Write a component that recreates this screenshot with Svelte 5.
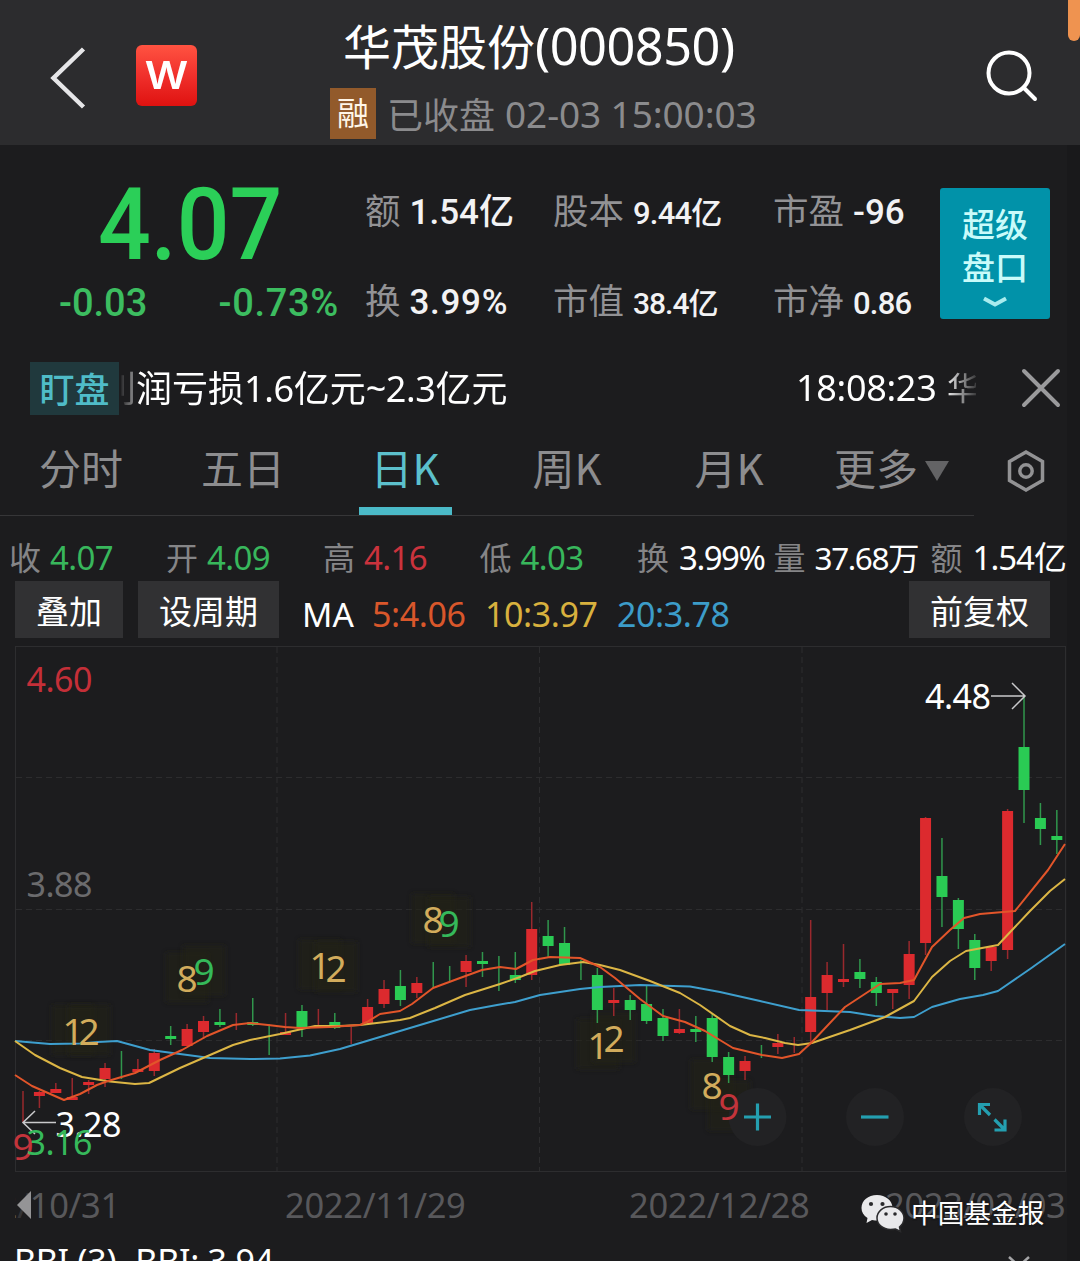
<script lang="ts">
  const facts = [
    { label: '额', value: '1.54亿', size: 'large' },
    { label: '股本', value: '9.44亿', size: 'medium' },
    { label: '市盈', value: '-96', size: 'large' },
    { label: '换', value: '3.99%', size: 'large percent' },
    { label: '市值', value: '38.4亿', size: 'small' },
    { label: '市净', value: '0.86', size: 'medium' },
  ];

  const tabs = ['分时', '五日', '日K', '周K', '月K', '更多'];
  let activeTab = $state('日K');

  const daily = [
    { label: '收', value: '4.07', tone: 'down' },
    { label: '开', value: '4.09', tone: 'down' },
    { label: '高', value: '4.16', tone: 'up' },
    { label: '低', value: '4.03', tone: 'down' },
    { label: '换', value: '3.99%', tone: 'turnover' },
    { label: '量', value: '37.68万', tone: 'volume' },
    { label: '额', value: '1.54亿', tone: 'total' },
  ];

  // direction, high, body top, body bottom, low (equal body edges = wick only)
  const candles: [string, number, number, number, number][] = [
    ['up', 1091, 1122, 1122, 1122],
    ['up', 1091, 1092, 1096, 1108],
    ['up', 1083, 1089, 1093, 1093],
    ['up', 1078, 1097, 1100, 1100],
    ['up', 1080, 1082, 1085, 1094],
    ['up', 1063, 1068, 1079, 1087],
    ['down', 1051, 1079, 1079, 1079],
    ['up', 1059, 1069, 1072, 1072],
    ['up', 1049, 1053, 1071, 1076],
    ['down', 1026, 1036, 1039, 1045],
    ['up', 1024, 1029, 1046, 1046],
    ['up', 1016, 1021, 1032, 1039],
    ['down', 1009, 1022, 1025, 1027],
    ['up', 1013, 1030, 1030, 1030],
    ['down', 998, 1022, 1025, 1026],
    ['down', 1024, 1055, 1055, 1055],
    ['up', 1013, 1032, 1035, 1035],
    ['down', 1005, 1011, 1028, 1037],
    ['up', 1009, 1026, 1026, 1026],
    ['down', 1013, 1022, 1028, 1029],
    ['up', 1027, 1044, 1044, 1044],
    ['up', 999, 1007, 1023, 1024],
    ['up', 980, 989, 1004, 1008],
    ['down', 970, 986, 1000, 1006],
    ['up', 977, 983, 993, 998],
    ['down', 962, 988, 988, 988],
    ['down', 966, 981, 981, 981],
    ['up', 955, 961, 972, 987],
    ['down', 952, 961, 964, 977],
    ['down', 956, 991, 991, 991],
    ['down', 952, 975, 980, 983],
    ['up', 902, 929, 975, 980],
    ['down', 920, 936, 946, 957],
    ['down', 927, 943, 965, 965],
    ['down', 960, 980, 980, 980],
    ['down', 968, 975, 1010, 1023],
    ['up', 988, 1000, 1003, 1016],
    ['down', 995, 1000, 1010, 1020],
    ['down', 985, 1004, 1021, 1024],
    ['down', 1009, 1018, 1036, 1041],
    ['up', 1009, 1029, 1033, 1034],
    ['down', 1016, 1029, 1032, 1042],
    ['down', 1014, 1018, 1057, 1062],
    ['down', 1052, 1057, 1075, 1083],
    ['up', 1056, 1061, 1071, 1080],
    ['down', 1045, 1058, 1058, 1058],
    ['up', 1034, 1043, 1047, 1054],
    ['up', 1037, 1053, 1053, 1053],
    ['up', 920, 997, 1032, 1042],
    ['up', 962, 975, 993, 1010],
    ['up', 944, 979, 982, 987],
    ['down', 959, 972, 979, 988],
    ['down', 977, 982, 993, 1006],
    ['up', 989, 989, 993, 1009],
    ['up', 941, 954, 985, 999],
    ['up', 817, 818, 943, 955],
    ['down', 838, 876, 897, 927],
    ['down', 898, 900, 929, 949],
    ['down', 934, 940, 968, 980],
    ['up', 947, 947, 961, 971],
    ['up', 809, 811, 950, 959],
    ['down', 697, 747, 790, 823],
    ['down', 803, 818, 829, 845],
    ['down', 810, 836, 840, 854],
  ];
  const candleX = (i: number) => 23 + i * 16.41;

  const averages = [
    {
      name: 'ma20',
      points:
        '15,1041 50,1044 80,1043.5 98,1042 117,1041 150,1050 180,1054 210,1058 250,1059 280,1058.5 310,1055.5 340,1049 360,1043 400,1031 430,1022 470,1010 497,1005 515,1002 540,995 580,989 600,987 640,985 690,986.5 720,992 760,1001 799,1010 850,1012 875,1016 900,1018 914,1017 932,1007 960,999 983,995 998,991 1030,969 1065,944',
    },
    {
      name: 'ma10',
      points:
        '15,1041 35,1055 60,1068 82,1077 110,1081.5 135,1084 149,1083 180,1068 210,1055 233,1045 250,1040 280,1034 315,1026 340,1026 360,1025 385,1022 400,1020 410,1018 435,1008 465,995 500,984 520,977 535,971 560,965 583,962 600,965 620,970 650,981 680,993 700,1005 730,1026 750,1035 765,1038 785,1043 798,1045 812,1043 850,1030 885,1017 914,1001 932,977 950,961 966,951 998,945 1030,911 1050,891 1065,879',
    },
    {
      name: 'ma5',
      points:
        '15,1075 32,1086 64,1100 80,1094 97,1085 108,1081 135,1073 160,1060 182,1050 207,1036 233,1025 250,1023 268,1025 285,1027 300,1028 330,1027 360,1025 367,1022 380,1014 400,1011 412,1004 433,988 460,978 482,970 500,967 516,969 533,960 550,957 580,958 600,967 615,978 640,999 663,1016 685,1022 705,1031 733,1048 762,1055 782,1058 799,1054 812,1042 845,1007 880,984 900,983 914,980 932,947 950,930 964,918 980,914 1015,911 1048,870 1065,844',
    },
  ];

  // sequential count markers
  const marks = [
    { n: '1', x: 73, y: 1031, tone: 'count' },
    { n: '2', x: 89, y: 1031, tone: 'count' },
    { n: '8', x: 187, y: 978.5, tone: 'count' },
    { n: '9', x: 204, y: 971.5, tone: 'low' },
    { n: '1', x: 320, y: 965.5, tone: 'count' },
    { n: '2', x: 336, y: 968, tone: 'count' },
    { n: '8', x: 433, y: 919.5, tone: 'count' },
    { n: '9', x: 449, y: 923, tone: 'low' },
    { n: '1', x: 598, y: 1045, tone: 'count' },
    { n: '2', x: 614, y: 1038.5, tone: 'count' },
    { n: '8', x: 712, y: 1085.5, tone: 'count' },
    { n: '9', x: 729, y: 1106.5, tone: 'high' },
    { n: '9', x: 23, y: 1146, tone: 'high' },
  ];
</script>

<div class="app">
  <header class="header">
    <svg class="back" viewBox="0 0 40 68" width="40" height="68">
      <path d="M35.5 5 L5.5 34 L35.5 63" />
    </svg>
    <div class="logo"><span>W</span></div>
    <div class="heading">
      <div class="title">华茂股份<span class="num">(000850)</span></div>
      <div class="subtitle">
        <span class="margin-badge">融</span>
        <span class="closed">已收盘</span>
        <span class="closed-time num">02-03 15:00:03</span>
      </div>
    </div>
    <svg class="search" viewBox="0 0 56 56" width="56" height="56">
      <circle cx="25" cy="25" r="20.5" />
      <path d="M39.5 39.5 L51 51" />
    </svg>
    <div class="edge-handle"></div>
  </header>

  <main class="screen">
    <section class="quote">
      <div class="price-box">
        <div class="price">4.07</div>
        <div class="changes">
          <span>-0.03</span>
          <span class="percent">-0.73%</span>
        </div>
      </div>
      <div class="facts">
        {#each facts as fact}
          <div class="fact">
            <span class="fact-label">{fact.label}</span>
            <span class="fact-value {fact.size}">{fact.value}</span>
          </div>
        {/each}
      </div>
      <button class="depth-btn">
        <span>超级</span>
        <span>盘口</span>
        <svg viewBox="0 0 28 12" width="28" height="12"><path d="M3 2.5 L14 8.5 L25 2.5" /></svg>
      </button>
    </section>

    <section class="ticker">
      <span class="ticker-badge">盯盘</span>
      <div class="ticker-view">
        <span class="ticker-news">利润亏损<i class="num">1.6</i>亿元<i class="num">~2.3</i>亿元</span>
        <span class="ticker-time num">18:08:23</span>
        <span class="ticker-next">华</span>
      </div>
      <svg class="close" viewBox="0 0 42 42" width="42" height="42">
        <path d="M4 4 L38 38 M38 4 L4 38" />
      </svg>
    </section>

    <nav class="tabs">
      <div class="tab-list">
        {#each tabs as tab}
          <button class="tab" class:active={tab === activeTab} onclick={() => (activeTab = tab)}>
            {tab}
            {#if tab === '更多'}
              <svg class="more" viewBox="0 0 24 20" width="24" height="20"><path d="M0 0 H24 L12 20 Z" /></svg>
            {/if}
          </button>
        {/each}
      </div>
      <svg class="settings" viewBox="0 0 40 44" width="40" height="44">
        <path d="M20 3 L36.5 12.5 V31.5 L20 41 L3.5 31.5 V12.5 Z" />
        <circle cx="20" cy="22" r="6.2" />
      </svg>
    </nav>

    <section class="daily">
      {#each daily as item}
        <div class="daily-item">
          <span class="daily-label">{item.label}</span>
          <span class="daily-value num {item.tone}">{item.value}</span>
        </div>
      {/each}
    </section>

    <section class="tools">
      <button class="tool">叠加</button>
      <button class="tool wide">设周期</button>
      <span class="ma-name num">MA</span>
      <span class="ma num five">5:4.06</span>
      <span class="ma num ten">10:3.97</span>
      <span class="ma num twenty">20:3.78</span>
      <button class="tool wide last">前复权</button>
    </section>

    <svg class="chart num" viewBox="0 644 1067 530" width="1067" height="530">
      <defs>
        <filter id="soft" x="-30%" y="-30%" width="160%" height="160%">
          <feGaussianBlur stdDeviation="2.5" />
        </filter>
      </defs>
      <rect class="frame" x="15.5" y="646.5" width="1050" height="525" />
      {#each [777.5, 909.5, 1040.5] as y}
        <path class="grid" d="M16 {y} H1065" />
      {/each}
      {#each [277, 539.5, 802] as x}
        <path class="grid" d="M{x} 647 V1171" />
      {/each}

      {#each marks.slice(0, 12) as mark}
        <rect class="glow" x={mark.x - 21} y={mark.y - 26} width="42" height="50" filter="url(#soft)" />
      {/each}

      {#each [757.5, 875, 993] as x}
        <circle class="zoom-bg" cx={x} cy="1117" r="29" />
      {/each}

      {#each candles as [dir, high, top, bottom, low], i}
        <g class="candle {dir}">
          <path d="M{candleX(i)} {high} V{low}" />
          {#if bottom > top}
            <rect x={candleX(i) - 5.5} y={top} width="11" height={bottom - top} />
          {/if}
        </g>
      {/each}

      {#each averages as line}
        <polyline class="line {line.name}" points={line.points} />
      {/each}

      {#each marks as mark}
        <text class="mark {mark.tone}" x={mark.x} y={mark.y + 13.5}>{mark.n}</text>
      {/each}

      <text class="axis up" x="26.5" y="692">4.60</text>
      <text class="axis" x="26.5" y="897">3.88</text>

      <path class="zoom-icon" d="M744 1117 H771 M757.5 1103.5 V1130.5" />
      <path class="zoom-icon" d="M861 1117 H888.5" />
      <path
        class="zoom-icon"
        d="M990 1104.5 H979.5 V1115 M979.5 1104.5 L990 1115 M994.5 1119.5 L1005 1130 M994.5 1130 H1005 V1119.5"
      />

      <text class="extreme" x="925" y="709">4.48</text>
      <path class="pointer" d="M991 696 H1025 M1012 683 L1025 696 L1012 709" />
      <text class="extreme" x="55.5" y="1136.5">3.28</text>
      <path class="pointer" d="M56 1122.5 H23 M35 1111 L23 1122.5 L35 1134" />
      <text class="axis down" x="26.5" y="1154.5">3.16</text>
    </svg>

    <section class="dates num">
      <div class="first-date">
        <span>2022/10/31</span>
        <svg viewBox="0 0 14 28" width="14" height="28"><path d="M14 0 V28 L0 14 Z" /></svg>
      </div>
      <span class="date">2022/11/29</span>
      <span class="date">2022/12/28</span>
      <span class="date">2023/02/03</span>
      <div class="watermark">
        <svg viewBox="860 1192 46 40" width="46" height="40">
          <path
            d="M877 1194 C868 1194 861.5 1199.5 861.5 1207 C861.5 1211 863.5 1214.5 867.5 1217 L866.5 1222 L872 1219 C874 1219.5 876 1219.5 878 1219.5 C886 1219.5 892.5 1214 892.5 1207 C892.5 1199.5 885.5 1194 877 1194 Z"
          />
          <path
            class="front"
            d="M890.5 1205.5 C883 1205.5 877 1210.5 877 1217 C877 1223.5 883 1228.5 890.5 1228.5 C892.5 1228.5 894 1228.5 895.5 1228 L900.5 1230.5 L899.5 1226 C902 1224 904 1221 904 1217 C904 1210.5 898 1205.5 890.5 1205.5 Z"
          />
          <circle class="eye" cx="871" cy="1203" r="2.1" />
          <circle class="eye" cx="882.5" cy="1203" r="2.1" />
          <circle class="eye" cx="886" cy="1213" r="1.8" />
          <circle class="eye" cx="895" cy="1213" r="1.8" />
        </svg>
        <span>中国基金报</span>
      </div>
    </section>

    <section class="indicator num">
      <span>BBI (3)</span>
      <span>BBI: 3.94</span>
      <svg viewBox="0 0 24 14" width="24" height="14"><path d="M2 2 L12 11 L22 2" /></svg>
    </section>
  </main>
</div>

<style>
  :global(body) {
    margin: 0;
    background: #19191b;
    overflow: hidden;
  }

  .app {
    position: relative;
    width: 1080px;
    height: 1261px;
    overflow: hidden;
    color: #fff;
    font-family: 'Noto Sans CJK SC', 'Noto Sans', sans-serif;
    white-space: nowrap;
  }

  .num {
    font-family: 'Noto Sans', 'Noto Sans CJK SC', sans-serif;
  }

  button {
    padding: 0;
    border: none;
    background: none;
    color: inherit;
    font-family: inherit;
    cursor: pointer;
  }

  svg {
    display: block;
    flex-shrink: 0;
    fill: none;
  }

  .header {
    display: flex;
    align-items: flex-start;
    box-sizing: border-box;
    height: 145px;
    background: #2c2c2e;
  }

  .back {
    margin: 44px 0 0 48px;
    stroke: #e6e6e8;
    stroke-width: 4.5;
  }

  .logo {
    width: 61px;
    height: 61px;
    margin: 45px 0 0 48px;
    border-radius: 6px;
    background: linear-gradient(#ff5341, #f0302c 50%, #df1210);
    font: 600 38px/61px Inter, sans-serif;
    text-align: center;
  }

  .logo span {
    display: inline-block;
    transform: scaleX(1.12);
  }

  .heading {
    width: 440px;
    margin-left: 133px;
  }

  .title {
    height: 84px;
    padding-left: 13px;
    font-size: 48px;
    line-height: 89px;
  }

  .title span {
    font-size: 50.5px;
    line-height: 1;
    letter-spacing: -0.5px;
  }

  .subtitle {
    display: flex;
    align-items: center;
    height: 58px;
    color: #8b8b8d;
    line-height: 50px;
  }

  .margin-badge {
    width: 46px;
    height: 51px;
    background: #925a2b;
    color: #fff6e8;
    font-size: 32px;
    line-height: 47px;
    text-align: center;
  }

  .closed {
    margin-left: 11px;
    font-size: 36px;
  }

  .closed-time {
    padding-top: 1px;
    margin-left: 10px;
    font-size: 37px;
    letter-spacing: -0.1px;
  }

  .search {
    margin: 48px 0 0 214px;
    stroke: #fff;
    stroke-width: 4;
    stroke-linecap: round;
  }

  .edge-handle {
    width: 12px;
    height: 41px;
    margin-left: auto;
    border-radius: 0 0 6px 6px;
    background: #ef9350;
  }

  .screen {
    width: 1067px;
    height: 1116px;
    background: #1c1c1e;
  }

  .quote {
    display: flex;
    height: 216px;
  }

  .price-box {
    width: 365px;
    color: #2bcf58;
    font-family: Roboto, sans-serif;
    font-weight: 500;
  }

  .price {
    margin: 30px 0 0 98px;
    font-size: 100px;
    line-height: 100px;
    transform: scaleX(0.93);
    transform-origin: left;
  }

  .changes {
    display: flex;
    justify-content: space-between;
    padding: 6px 26px 0 59px;
    color: #3cbd60;
    font-size: 38px;
    line-height: 44px;
  }

  .percent {
    letter-spacing: 0.7px;
  }

  .facts {
    display: grid;
    grid-template-columns: 188px 220px 167px;
    grid-template-rows: 90px 90px;
    padding-top: 20px;
  }

  .fact {
    display: flex;
    align-items: baseline;
    gap: 9px;
    line-height: 88px;
  }

  .fact-label {
    color: #929295;
    font-size: 35.5px;
  }

  .fact-value {
    color: #f2f2f4;
    font-family: Roboto, 'Noto Sans CJK SC', sans-serif;
    font-weight: 500;
    line-height: 1;
  }

  .fact-value.large {
    font-size: 35px;
  }

  .fact-value.medium {
    font-size: 31px;
    letter-spacing: -0.8px;
  }

  .fact-value.small {
    font-size: 30px;
    letter-spacing: -1px;
  }

  .depth-btn {
    display: flex;
    flex-direction: column;
    align-items: center;
    width: 110px;
    height: 131px;
    margin-top: 43px;
    padding-top: 14px;
    border-radius: 3px;
    background: #0192a9;
    color: #c9fbfa;
    font-size: 33px;
    font-weight: 500;
    line-height: 43px;
  }

  .depth-btn svg {
    margin-top: 8px;
    stroke: #a9ecee;
    stroke-width: 4;
  }

  .ticker {
    display: flex;
    align-items: center;
    height: 54px;
    padding-left: 30px;
  }

  .ticker-badge {
    width: 89px;
    height: 53px;
    background: #20393d;
    color: #4fbcc8;
    font-size: 35px;
    font-weight: 500;
    line-height: 51px;
    text-align: center;
  }

  .ticker-view {
    display: flex;
    width: 857px;
    overflow: hidden;
    font-size: 36px;
    line-height: 50px;
    mask-image: linear-gradient(90deg, transparent, #0008 16px, #000 19px, #000 825px, transparent 862px);
  }

  .ticker-news {
    width: 696px;
    margin-left: -19px;
    flex-shrink: 0;
  }

  .ticker-news i {
    font-size: 36px;
    font-style: normal;
    line-height: 1;
    letter-spacing: -0.4px;
  }

  .ticker-time {
    width: 151px;
    flex-shrink: 0;
    line-height: 54px;
    letter-spacing: -0.3px;
  }

  .ticker-next {
    font-size: 32px;
  }

  .close {
    margin-left: 44px;
    stroke: #9a9a9c;
    stroke-width: 4;
    stroke-linecap: round;
  }

  .tabs {
    display: flex;
    height: 101px;
  }

  .tab-list {
    display: flex;
    width: 974px;
    border-bottom: 1.5px solid #363638;
  }

  .tab {
    position: relative;
    display: flex;
    align-items: center;
    justify-content: center;
    width: 162px;
    padding-top: 4px;
    color: #8d8d8f;
    font-size: 42px;
    line-height: 96px;
  }

  .tab:last-child {
    gap: 7px;
    padding-left: 1px;
  }

  .tab.active {
    color: #5cc0cc;
  }

  .tab.active::after {
    content: '';
    position: absolute;
    bottom: 0;
    left: 34.5px;
    width: 93px;
    height: 8px;
    background: #4bbac8;
  }

  .more {
    margin-top: 8px;
    fill: #636365;
  }

  .settings {
    margin: 34px 0 0 32px;
    stroke: #929294;
    stroke-width: 3.5;
  }

  .daily {
    display: grid;
    grid-template-columns: 157px 157px 156.5px 157.5px 136.5px 157px 136px;
    height: 65px;
    padding-left: 9px;
  }

  .daily-item {
    display: flex;
    align-items: baseline;
    gap: 9px;
    line-height: 81px;
  }

  .daily-label {
    color: #858587;
    font-size: 32px;
  }

  .daily-value {
    font-size: 33px;
    line-height: 1;
    letter-spacing: -0.6px;
  }

  .daily-value.turnover {
    padding-left: 1px;
    letter-spacing: -1.5px;
  }

  .daily-value.volume {
    font-size: 31.5px;
    letter-spacing: -1.4px;
  }

  .daily-value.total {
    padding-left: 1px;
    letter-spacing: -1px;
  }

  .daily-value.up {
    color: #cb333d;
  }

  .daily-value.down {
    color: #38b75c;
  }

  .tools {
    display: flex;
    height: 57px;
    padding: 0 17px 0 15px;
    font-size: 34px;
    line-height: 66px;
  }

  .tool {
    width: 108px;
    margin-right: 15px;
    background: #313133;
    font-size: 33px;
    line-height: 56px;
  }

  .tool.wide {
    width: 141px;
  }

  .tool.last {
    margin: 0 0 0 auto;
  }

  .ma {
    letter-spacing: -0.4px;
  }

  .ma-name {
    width: 70px;
    margin-left: 8px;
    font-size: 33.5px;
  }

  .ma.five {
    width: 113px;
    color: #d9572b;
  }

  .ma.ten {
    width: 132px;
    color: #d8b13e;
  }

  .ma.twenty {
    color: #3c9cc9;
  }

  .chart {
    margin-top: 6px;
  }

  .frame {
    stroke: #2d2d2f;
  }

  .grid {
    stroke: #2c2c2e;
    stroke-dasharray: 6 4;
  }

  .glow {
    fill: #242119;
    opacity: 0.6;
  }

  .candle path {
    stroke-width: 1.5;
    opacity: 0.8;
  }

  .candle.up {
    fill: #dc2a2e;
  }

  .candle.up path {
    stroke: #b92c31;
  }

  .candle.down {
    fill: #2acb54;
  }

  .candle.down path {
    stroke: #35b558;
  }

  .line {
    stroke-width: 2;
    stroke-linejoin: round;
  }

  .ma5 {
    stroke: #e2552a;
  }

  .ma10 {
    stroke: #dcb645;
  }

  .ma20 {
    stroke: #3e9fce;
  }

  .mark {
    font-size: 37px;
    text-anchor: middle;
  }

  .mark.count {
    fill: #d2ac5c;
  }

  .mark.low {
    fill: #35b95a;
  }

  .mark.high {
    fill: #c3343b;
  }

  .axis {
    fill: #6b6b6d;
    font-size: 34px;
    letter-spacing: -0.5px;
  }

  .axis.up {
    fill: #c42f38;
  }

  .axis.down {
    fill: #36b95b;
  }

  .extreme {
    fill: #fff;
    font-size: 34px;
    letter-spacing: -0.5px;
  }

  .pointer {
    stroke: #c9c9cb;
    stroke-width: 1.5;
  }

  .zoom-bg {
    fill: #222224;
  }

  .zoom-icon {
    stroke: #249fb0;
    stroke-width: 3.2;
  }

  .dates {
    position: relative;
    display: flex;
    height: 64px;
    color: #58585b;
    font-size: 34.5px;
    line-height: 62px;
    letter-spacing: -0.3px;
  }

  .date {
    flex-shrink: 0;
    width: 344px;
  }

  .date + .date + .date {
    width: auto;
    margin-left: -88px;
  }

  .first-date {
    position: relative;
    display: flex;
    flex-shrink: 0;
    justify-content: flex-end;
    width: 105px;
    margin: 0 165px 0 15px;
    overflow: hidden;
  }

  .first-date svg {
    position: absolute;
    top: 17px;
    left: 2px;
    fill: #949496;
    background: #1c1c1e99;
  }

  .watermark {
    position: absolute;
    top: 19px;
    left: 860px;
    display: flex;
    align-items: center;
    gap: 5px;
    color: #fff;
    font-family: 'Noto Sans CJK SC', sans-serif;
    font-size: 26.7px;
    line-height: 36px;
    letter-spacing: 0;
    text-shadow: 0 0 2px #1c1c1e, 0 0 2px #1c1c1e, 1px 1px 1px #1c1c1e;
  }

  .watermark span {
    height: 38px;
  }

  .watermark path {
    fill: #e9e9eb;
  }

  .watermark .front {
    stroke: #2a2a2c;
    stroke-width: 1.5;
  }

  .watermark .eye {
    fill: #2a2a2c;
  }

  .indicator {
    display: flex;
    gap: 19px;
    padding-left: 14px;
    font-size: 34px;
    line-height: 46px;
    letter-spacing: -0.3px;
  }

  .indicator svg {
    margin: 17px 36px 0 auto;
    stroke: #a5a5a7;
    stroke-width: 2.5;
  }
</style>
